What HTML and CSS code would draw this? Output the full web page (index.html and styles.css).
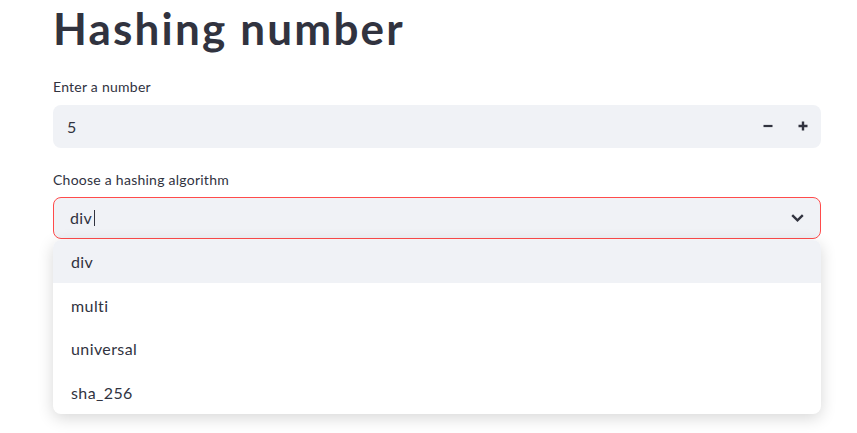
FILE: index.html
```html
<!DOCTYPE html>
<html lang="en">
<head>
<meta charset="utf-8">
<title>Hashing number</title>
<link rel="stylesheet" href="styles.css">
</head>
<body>
<main class="main">
  <h1 class="title">Hashing number</h1>

  <div class="field field-number">
    <div class="label">Enter a number</div>
    <div class="number-input">
      <span class="number-value">5</span>
      <div class="steppers">
        <div class="step">
          <svg width="10" height="10" viewBox="0 0 10 10"><path d="M0.5 5H9.5" stroke="#31333F" stroke-width="2.2"/></svg>
        </div>
        <div class="step">
          <svg width="10" height="10" viewBox="0 0 10 10"><path d="M0.5 5H9.5M5 0.5V9.5" stroke="#31333F" stroke-width="2.4"/></svg>
        </div>
      </div>
    </div>
  </div>

  <div class="field field-select">
    <div class="label">Choose a hashing algorithm</div>
    <div class="select-wrap">
      <div class="select">
        <span class="select-value">div<span class="caret"></span></span>
        <svg class="chevron" width="13" height="8" viewBox="0 0 13 8"><path d="M1.2 1.2L6.5 6.3L11.8 1.2" fill="none" stroke="#31333F" stroke-width="2.4"/></svg>
      </div>
      <div class="dropdown">
        <div class="dropdown-item active">div</div>
        <div class="dropdown-item">multi</div>
        <div class="dropdown-item">universal</div>
        <div class="dropdown-item">sha_256</div>
      </div>
    </div>
  </div>
</main>
</body>
</html>
```

FILE: styles.css
```css
* { box-sizing: border-box; }
html, body {
  margin: 0;
  padding: 0;
  background: #ffffff;
  min-height: 100vh;
}
body {
  font-family: Lato, "Liberation Sans", sans-serif;
  color: #31333F;
}
.main {
  width: 768px;
  min-height: 100vh;
  margin-left: 53px;
  display: flex;
  flex-direction: column;
}
.title {
  margin: 2px 0 0 0;
  font-size: 44px;
  line-height: 53px;
  font-weight: 700;
  letter-spacing: 2.2px;
  color: #31333F;
}
.field {
  display: flex;
  flex-direction: column;
}
.field-number { margin-top: 21.6px; }
.field-select { margin-top: 21.6px; }
.label {
  font-size: 14px;
  line-height: 20px;
  letter-spacing: 0.25px;
  color: #31333F;
  margin-bottom: 8.4px;
}
.field-select .label { margin-bottom: 7.4px; }
.number-input {
  height: 43px;
  background: #f0f2f6;
  border-radius: 8px;
  display: flex;
  align-items: center;
  justify-content: space-between;
  padding-left: 14px;
  padding-right: 1px;
}
.number-value {
  font-size: 16px;
}
.steppers {
  display: flex;
  height: 100%;
}
.step {
  width: 35px;
  height: 100%;
  display: flex;
  align-items: center;
  justify-content: center;
}
.select-wrap {
  position: relative;
}
.select {
  height: 42px;
  border: 1px solid #ff4b4b;
  border-radius: 8px;
  background: #f0f2f6;
  display: flex;
  align-items: center;
  justify-content: space-between;
  padding-left: 16px;
  padding-right: 16px;
}
.select-value {
  font-size: 16px;
  letter-spacing: 0.4px;
  display: flex;
  align-items: center;
}
.caret {
  display: inline-block;
  width: 1px;
  height: 16px;
  background: #31333F;
  margin-left: 2px;
}
.dropdown {
  position: absolute;
  z-index: 10;
  left: 0;
  right: 0;
  top: calc(100% + 1px);
  background: #ffffff;
  border-radius: 8px;
  box-shadow: 0 4px 16px rgba(0, 0, 0, 0.16);
  overflow: hidden;
}
.dropdown-item {
  height: 43.5px;
  display: flex;
  align-items: center;
  padding-left: 18px;
  font-size: 16px;
  letter-spacing: 0.4px;
  color: #31333F;
}
.dropdown-item.active {
  background: #f0f2f6;
}
```
